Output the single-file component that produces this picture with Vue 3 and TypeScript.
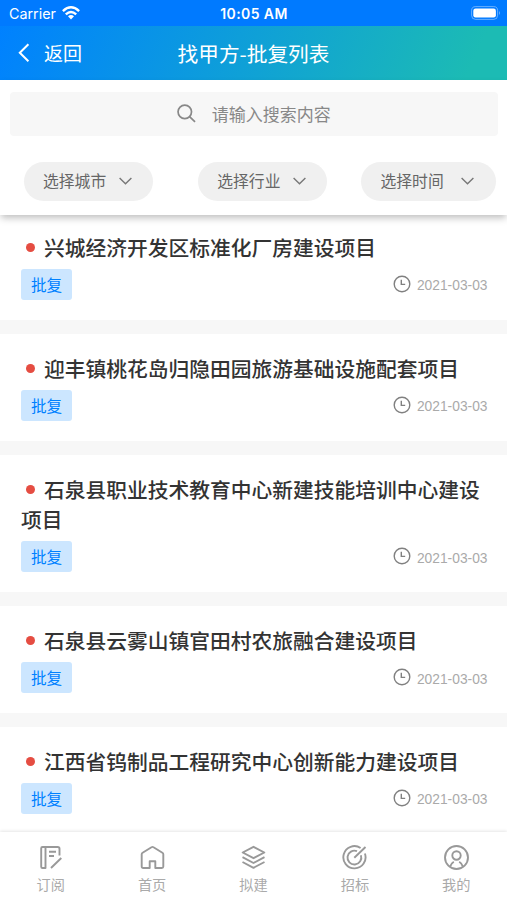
<script setup lang="ts">
interface Project {
  title: string
  date: string
}

const filters: { label: string; size: string }[] = [
  { label: '选择城市', size: 'city' },
  { label: '选择行业', size: 'trade' },
  { label: '选择时间', size: 'time' },
]

const projects: Project[] = [
  { title: '兴城经济开发区标准化厂房建设项目', date: '2021-03-03' },
  { title: '迎丰镇桃花岛归隐田园旅游基础设施配套项目', date: '2021-03-03' },
  { title: '石泉县职业技术教育中心新建技能培训中心建设项目', date: '2021-03-03' },
  { title: '石泉县云雾山镇官田村农旅融合建设项目', date: '2021-03-03' },
  { title: '江西省钨制品工程研究中心创新能力建设项目', date: '2021-03-03' },
]

const tabs: { label: string; paths: string[] }[] = [
  { label: '订阅', paths: ['M21.5 10.5V3.8Q21.5 2 19.7 2H4.5Q3.2 2 3.2 3.3V21.7Q3.2 23 4.5 23H7.5V2', 'M11 6.8H18M11 11H16M23.3 13L13 23'] },
  { label: '首页', paths: ['M9.7 23H3.2Q1.7 23 1.7 21.5V9.3Q1.7 8.3 2.6 7.7L11.5 2.2Q12.5 1.6 13.5 2.2L22.4 7.7Q23.3 8.3 23.3 9.3V21.5Q23.3 23 21.8 23H15.3V16.2H9.7Z'] },
  { label: '拟建', paths: ['M12.5 1.8L23.3 7.5L12.5 13.2L1.7 7.5Z', 'M1.5 12.2L12.5 18L23.5 12.2', 'M1.5 17L12.5 22.8L23.5 17'] },
  { label: '招标', paths: ['M18.6 3A11.1 11.1 0 1 0 22.9 8.5', 'M15 6.2A6.9 6.9 0 1 0 18.9 10.3', 'M12.3 12.7L23.5 2'] },
  { label: '我的', paths: ['M12.5 1A11.5 11.5 0 1 0 12.5 24A11.5 11.5 0 1 0 12.5 1Z', 'M12.5 6.3A4.2 4.2 0 1 0 12.5 14.7A4.2 4.2 0 1 0 12.5 6.3Z', 'M6.2 21.5Q7.2 18.4 9.8 16.8M18.8 21.5Q17.8 18.4 15.2 16.8'] },
]
</script>

<template>
  <div class="screen">
    <header class="top">
      <div class="status">
        <div class="carrier">
          <span>Carrier</span>
          <svg class="wifi" viewBox="0 0 18 14" fill="none" stroke="#fff" stroke-width="2.4">
            <path d="M.9 5.1Q9-2.4 17.1 5.1M3.8 8.3Q9 3.5 14.2 8.3" />
            <path d="M6 10.3Q9 7.6 12 10.3L9 13.6Z" fill="#fff" stroke="none" />
          </svg>
        </div>
        <span class="clock">10:05 AM</span>
        <svg class="battery" viewBox="0 0 30 14">
          <rect x=".6" y=".6" width="26" height="12.8" rx="4" fill="none" stroke="#fff" stroke-opacity=".4" />
          <rect x="2.3" y="2.4" width="22.6" height="9.2" rx="2.3" fill="#fff" />
          <path d="M28 5Q30 7 28 9Z" fill="#fff" fill-opacity=".4" />
        </svg>
      </div>
      <nav class="nav">
        <div class="back">
          <svg viewBox="0 0 12 20"><path d="M10.4 1.2L1.8 9.7L10.4 18.2" /></svg>
          <span>返回</span>
        </div>
        <h1>找甲方-批复列表</h1>
      </nav>
    </header>

    <section class="tools">
      <div class="search">
        <svg viewBox="0 0 20 20"><circle cx="8.2" cy="8.2" r="7.1" /><path d="M13.2 13.2L19 18.8" /></svg>
        <span>请输入搜索内容</span>
      </div>
      <div class="filters">
        <div v-for="f in filters" :key="f.label" class="filter" :class="f.size">
          <span>{{ f.label }}</span>
          <svg viewBox="0 0 13 8"><path d="M.6 1L6.5 6.8L12.4 1" /></svg>
        </div>
      </div>
    </section>

    <main class="list">
      <article v-for="p in projects" :key="p.title" class="item">
        <h2><i class="dot" />{{ p.title }}</h2>
        <div class="meta">
          <span class="tag">批复</span>
          <div class="date">
            <svg viewBox="0 0 18 18"><circle cx="9" cy="9" r="7.8" /><path d="M8.3 4.8V9.4H12.2" /></svg>
            <time>{{ p.date }}</time>
          </div>
        </div>
      </article>
    </main>

    <footer class="tabs">
      <div v-for="t in tabs" :key="t.label" class="tab">
        <svg viewBox="0 0 25 25"><path v-for="d in t.paths" :key="d" :d="d" /></svg>
        <span>{{ t.label }}</span>
      </div>
    </footer>
  </div>
</template>

<style>
body {
  margin: 0;
  overflow: hidden;
}
</style>

<style scoped>
.screen {
  height: 900px;
  display: flex;
  flex-direction: column;
  overflow: hidden;
  background: #fff;
  font-family: "Noto Sans CJK SC", sans-serif;
}
svg {
  display: block;
  flex: none;
}
.top {
  flex: none;
  height: 80.4px;
  color: #fff;
}
.status {
  height: 25.5px;
  padding: 1px 6px 0 9px;
  box-sizing: border-box;
  display: grid;
  grid-template-columns: 1fr auto 1fr;
  align-items: center;
  background: #007aff;
  font: 14.3px Inter, sans-serif;
}
.carrier {
  display: flex;
  align-items: center;
  gap: 6px;
}
.wifi {
  width: 18px;
  height: 14px;
}
.clock {
  margin-right: 2px;
  font-weight: 600;
  font-size: 14px;
  letter-spacing: .4px;
}
.battery {
  width: 30px;
  height: 14px;
  justify-self: end;
}
.nav {
  height: 55px;
  padding: 0 18px 1px;
  box-sizing: border-box;
  display: grid;
  grid-template-columns: 1fr auto 1fr;
  align-items: center;
  background: linear-gradient(115deg, #0081ff 0%, #1cbbb4 92%);
}
.back {
  display: flex;
  align-items: center;
  gap: 14px;
  font-size: 19px;
  line-height: 28px;
}
.back svg {
  width: 12px;
  height: 20px;
  fill: none;
  stroke: #fff;
  stroke-width: 2;
}
.nav h1 {
  margin: 0;
  font-size: 20.7px;
  font-weight: 400;
  line-height: 30px;
}
.tools {
  position: relative;
  z-index: 1;
  flex: none;
  height: 134.2px;
  box-sizing: border-box;
  padding: 12px 9.5px 0 10px;
  background: #fff;
  box-shadow: 0 4px 7px -1px rgba(0, 0, 0, .25);
}
.search {
  height: 43.5px;
  display: flex;
  align-items: center;
  justify-content: center;
  gap: 16px;
  border-radius: 4px;
  background: #f7f7f7;
  color: #888;
  font-size: 17px;
}
.search span {
  padding-bottom: 2px;
}
.search svg {
  width: 19px;
  height: 19px;
  margin-bottom: 1px;
  fill: none;
  stroke: #888;
  stroke-width: 1.8;
}
.filters {
  display: flex;
  justify-content: space-between;
  margin: 26px 2px 0 14px;
}
.filter {
  width: 129px;
  height: 39px;
  box-sizing: border-box;
  padding: 0 21.5px 0 19px;
  display: flex;
  align-items: center;
  justify-content: space-between;
  border-radius: 20px;
  background: #f0f0f0;
  color: #666;
  font-size: 15.8px;
}
.filter span {
  padding-bottom: 1px;
}
.filter.trade {
  margin-left: 12px;
}
.filter.time {
  width: 135px;
  padding-left: 20px;
}
.filter svg {
  width: 13px;
  height: 8px;
  fill: none;
  stroke: #777;
  stroke-width: 1.4;
}
.list {
  flex: 1;
  min-height: 0;
  overflow: hidden;
  margin-top: -1.8px;
  display: flex;
  flex-direction: column;
  gap: 13.5px;
  background: #f7f7f7;
}
.item {
  flex: none;
  padding: 19.2px 19.5px 20px 21px;
  background: #fff;
}
.item h2 {
  margin: 0;
  color: #333;
  font-size: 20.75px;
  font-weight: 500;
  line-height: 30.4px;
}
.dot {
  display: inline-block;
  width: 9px;
  height: 9px;
  margin: 0 9px 5px 5px;
  border-radius: 50%;
  background: #e54d42;
  vertical-align: middle;
}
.meta {
  display: flex;
  justify-content: space-between;
  margin-top: 6.6px;
}
.tag {
  width: 51px;
  height: 31.2px;
  border-radius: 3px;
  background: #cce6ff;
  color: #0081ff;
  font-size: 15.6px;
  line-height: 31px;
  text-align: center;
}
.date {
  display: flex;
  align-items: center;
  gap: 6px;
  height: 30px;
  color: #aaa;
  font: 13.8px "Liberation Sans", sans-serif;
}
.date svg {
  width: 18px;
  height: 18px;
  fill: none;
  stroke: #808080;
  stroke-width: 1.4;
}
.date time {
  padding-top: 4px;
}
.tabs {
  position: relative;
  flex: none;
  height: 68px;
  display: grid;
  grid-template-columns: repeat(5, 1fr);
  background: #fff;
  box-shadow: 0 -1px 3px rgba(0, 0, 0, .1);
  color: #aaa;
  font-size: 14.2px;
}
.tab {
  display: flex;
  flex-direction: column;
  align-items: center;
  padding-top: 13px;
  line-height: 20px;
}
.tab svg {
  width: 25px;
  height: 25px;
  margin-bottom: 4px;
  fill: none;
  stroke: #999;
  stroke-width: 1.9;
  stroke-linejoin: round;
}
</style>
